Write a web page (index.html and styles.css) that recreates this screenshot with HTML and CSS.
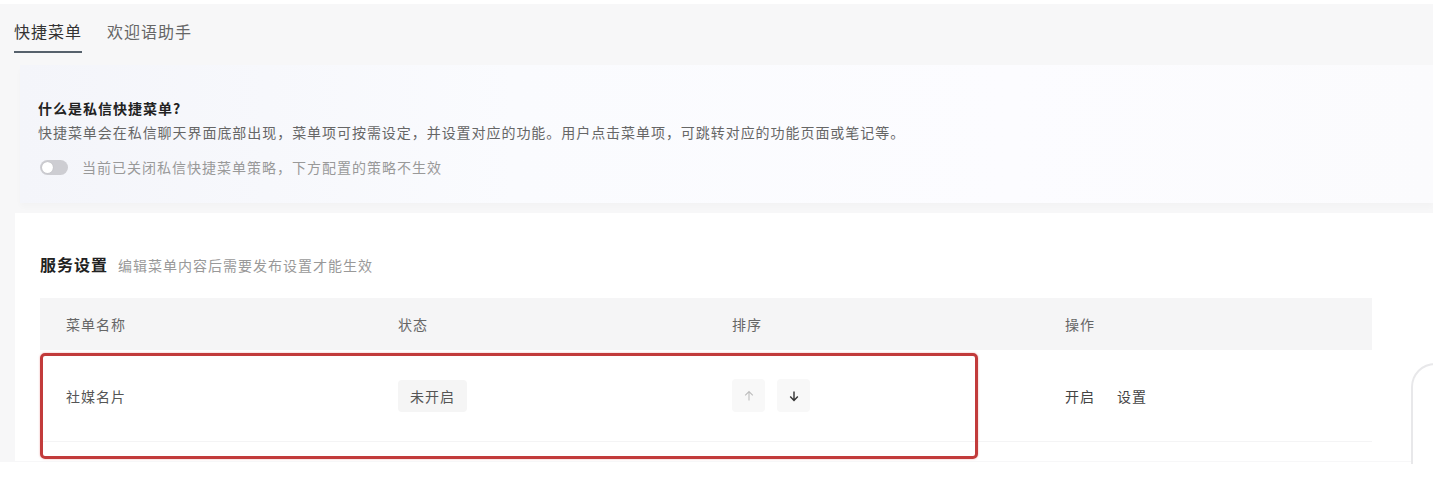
FILE: index.html
```html
<!DOCTYPE html>
<html lang="zh-CN">
<head>
    <meta charset="UTF-8">
    <meta name="viewport" content="width=device-width, initial-scale=1.0">
    <title>快捷菜单</title>
    <link rel="stylesheet" href="styles.css">
</head>
<body>
    <div class="page">
        <div class="tabs">
            <a class="tab active">快捷菜单</a>
            <a class="tab">欢迎语助手</a>
        </div>

        <div class="intro">
            <div class="intro-title">什么是私信快捷菜单?</div>
            <div class="intro-desc">快捷菜单会在私信聊天界面底部出现，菜单项可按需设定，并设置对应的功能。用户点击菜单项，可跳转对应的功能页面或笔记等。</div>
            <div class="intro-switch">
                <span class="switch"><span class="knob"></span></span>
                <span>当前已关闭私信快捷菜单策略，下方配置的策略不生效</span>
            </div>
        </div>

        <div class="panel">
            <div class="panel-head">
                <h2>服务设置</h2>
                <span class="panel-hint">编辑菜单内容后需要发布设置才能生效</span>
            </div>

            <div class="table">
                <div class="row thead">
                    <div class="cell">菜单名称</div>
                    <div class="cell">状态</div>
                    <div class="cell">排序</div>
                    <div class="cell">操作</div>
                </div>
                <div class="row tbody">
                    <div class="cell">社媒名片</div>
                    <div class="cell"><span class="tag">未开启</span></div>
                    <div class="cell sort">
                        <span class="sort-btn disabled">
                            <svg width="12" height="12" viewBox="0 0 12 12"><path d="M6 10.5V1.8M2.2 5.4L6 1.6l3.8 3.8" fill="none" stroke="currentColor" stroke-width="1.1"/></svg>
                        </span>
                        <span class="sort-btn">
                            <svg width="12" height="12" viewBox="0 0 12 12"><path d="M6 1.5v8.7M2.2 6.6L6 10.4l3.8-3.8" fill="none" stroke="currentColor" stroke-width="1.4"/></svg>
                        </span>
                    </div>
                    <div class="cell actions">
                        <a>开启</a>
                        <a>设置</a>
                    </div>
                    <!-- annotation box drawn over the row -->
                    <div class="mark"></div>
                </div>
            </div>
        </div>
    </div>

    <div class="side-widget"></div>
</body>
</html>
```

FILE: styles.css
```css
body {
    margin: 0;
    background-color: #ffffff;
    font-family: "Noto Sans CJK SC", "Noto Sans", sans-serif;
    color: #333;
    overflow: hidden;
}
.page {
    margin-top: 4px;
    background-color: #f7f7f8;
    height: 458px;
    overflow: hidden;
}
.tabs {
    display: flex;
    gap: 25px;
    padding-left: 14px;
}
.tab {
    font-size: 16px;
    letter-spacing: 1px;
    line-height: 22px;
    padding-top: 16px;
    padding-bottom: 9px;
    color: #666;
    border-bottom: 2px solid transparent;
}
.tab.active {
    color: #333;
    border-bottom-color: #56616c;
}
.intro {
    margin-top: 12px;
    margin-left: 20px;
    padding: 33px 18px 26px;
    background: linear-gradient(90deg, #f4f5fa 0%, #fafbfe 35%, #fcfcff 70%, #fbfbfd 100%);
    box-shadow: 0 4px 6px rgba(0, 0, 0, 0.02);
}
.intro-title {
    font-size: 14px;
    font-weight: bold;
    letter-spacing: 1px;
    line-height: 20px;
    color: #222;
}
.intro-desc {
    margin-top: 4px;
    font-size: 14px;
    letter-spacing: 0.95px;
    line-height: 20px;
    color: #666;
}
.intro-switch {
    margin-top: 15px;
    display: flex;
    align-items: center;
    gap: 14px;
    font-size: 14px;
    letter-spacing: 1px;
    line-height: 20px;
    color: #999;
}
.switch {
    width: 28px;
    height: 15px;
    border-radius: 8px;
    background-color: #cdcdd2;
    position: relative;
    margin-left: 2px;
}
.knob {
    position: absolute;
    top: 2px;
    left: 2px;
    width: 11px;
    height: 11px;
    border-radius: 50%;
    background-color: #fff;
    box-shadow: 0 0 1px rgba(0, 0, 0, 0.2);
}
.panel {
    margin-top: 10px;
    margin-left: 15px;
    padding: 39px 0 19px 25px;
    background-color: #fff;
}
.panel-head {
    display: flex;
    align-items: baseline;
    gap: 10px;
}
.panel-head h2 {
    margin: 0;
    font-size: 16px;
    font-weight: bold;
    letter-spacing: 1px;
    line-height: 24px;
    color: #222;
}
.panel-hint {
    font-size: 14px;
    letter-spacing: 1px;
    color: #999;
}
.table {
    margin-top: 22px;
    width: 1332px;
}
.row {
    display: grid;
    grid-template-columns: 332px 334px 333px 333px;
    align-items: center;
    position: relative;
}
.cell {
    padding-left: 26px;
    font-size: 14px;
    letter-spacing: 1px;
}
.thead {
    height: 52px;
    background-color: #f5f5f6;
    color: #666;
}
.tbody {
    height: 91px;
    color: #555;
    border-bottom: 1px solid #f4f4f5;
}
.tag {
    display: inline-block;
    padding: 6px 12px;
    border-radius: 4px;
    background-color: #f5f5f5;
    color: #555;
    line-height: 20px;
}
.sort {
    display: flex;
    gap: 12px;
}
.sort-btn {
    width: 33px;
    height: 33px;
    border-radius: 4px;
    background-color: #f8f8f8;
    display: flex;
    align-items: center;
    justify-content: center;
    color: #333;
}
.sort-btn.disabled {
    color: #bdbdbd;
}
.actions {
    display: flex;
    gap: 22px;
    color: #444;
}
.mark {
    position: absolute;
    left: 0;
    top: 3px;
    width: 932px;
    height: 100px;
    border: 3px solid #c23b3b;
    border-radius: 5px;
    box-shadow: 0 0 2px rgba(220, 80, 80, 0.5);
    pointer-events: none;
}
.side-widget {
    position: absolute;
    left: 1411px;
    top: 363px;
    width: 60px;
    height: 99px;
    border: 2px solid #e8e8ea;
    border-bottom: none;
    border-top-left-radius: 24px;
    background-color: #fff;
}
```
